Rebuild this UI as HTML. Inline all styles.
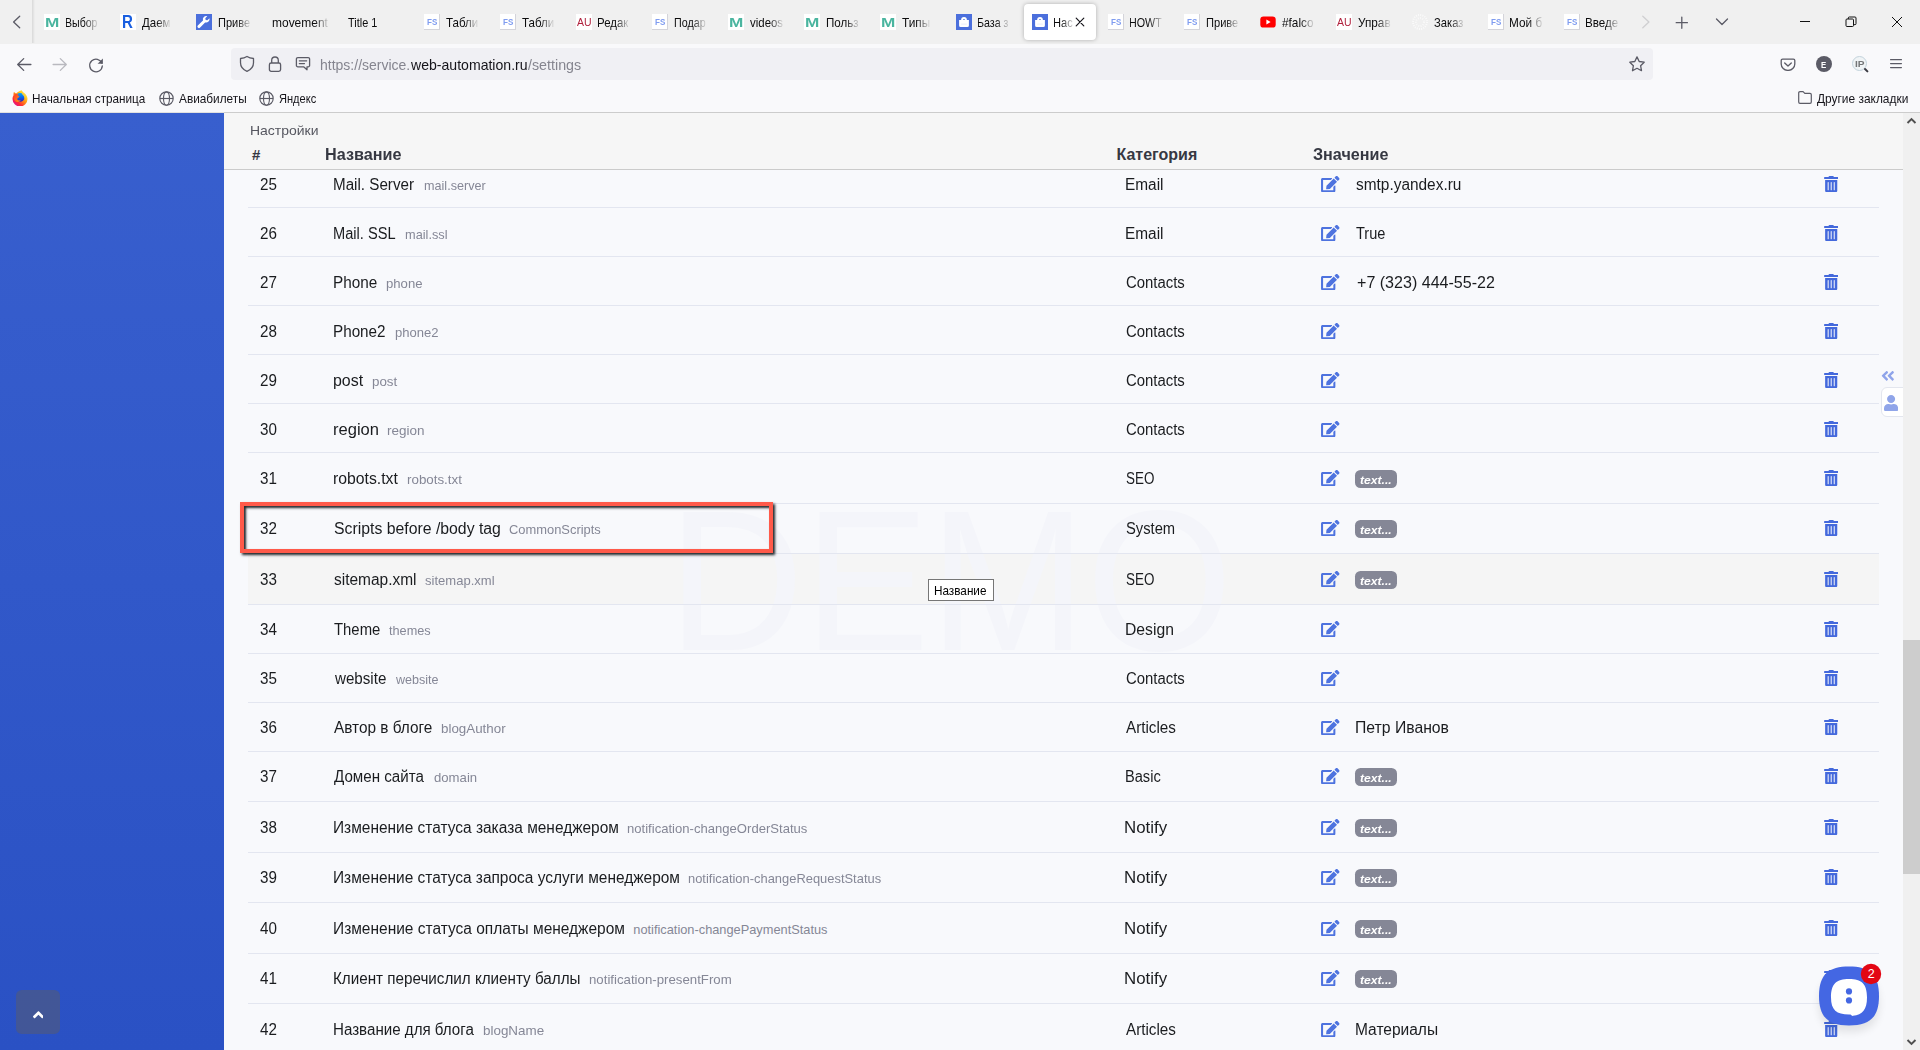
<!DOCTYPE html>
<html lang="ru"><head><meta charset="utf-8"><title>Настройки</title><style>
html,body{margin:0;padding:0}
body{width:1920px;height:1050px;overflow:hidden;position:relative;background:#f8f9fc;font-family:"Liberation Sans",sans-serif}
.a{position:absolute}
.t{position:absolute;white-space:pre;transform-origin:0 50%}
.sep{left:248px;width:1631px;height:1px;background:#e3e6f0}
.badge{width:42px;height:17.5px;border-radius:5.500px;background:#858796}
.tl{overflow:hidden}
.wm{font-size:196px;line-height:220px;font-weight:normal;color:#f4f5fa;letter-spacing:6px;white-space:pre}
</style></head>
<body>
<div class="a" style="left:0;top:113px;width:224px;height:937px;background:linear-gradient(180deg,#385fce,#2a51c4)"></div>
<div class="a" style="left:248px;top:554px;width:1631px;height:50px;background:#f5f5f5"></div>
<span class="t" style="left:667.95px;top:440.60px;font-size:200px;line-height:280px;color:#f4f5fa;transform:scaleX(0.9409);">DEMO</span>
<div class="a sep" style="top:207px"></div>
<div class="a sep" style="top:256px"></div>
<div class="a sep" style="top:305px"></div>
<div class="a sep" style="top:354px"></div>
<div class="a sep" style="top:403px"></div>
<div class="a sep" style="top:452px"></div>
<div class="a sep" style="top:503px"></div>
<div class="a sep" style="top:553px"></div>
<div class="a sep" style="top:604px"></div>
<div class="a sep" style="top:653px"></div>
<div class="a sep" style="top:702px"></div>
<div class="a sep" style="top:751px"></div>
<div class="a sep" style="top:801px"></div>
<div class="a sep" style="top:852px"></div>
<div class="a sep" style="top:902px"></div>
<div class="a sep" style="top:953px"></div>
<div class="a sep" style="top:1003px"></div>
<span class="t" style="left:260.30px;top:173.60px;font-size:16px;line-height:22px;color:#1a1c1f;transform:scaleX(0.9498);">25</span>
<span class="t" style="left:333.35px;top:173.60px;font-size:16px;line-height:22px;color:#1a1c1f;transform:scaleX(0.9492);">Mail. Server</span>
<span class="t" style="left:424.30px;top:176.60px;font-size:12.8px;line-height:18px;color:#858796;transform:scaleX(0.9856);">mail.server</span>
<span class="t" style="left:1124.54px;top:173.60px;font-size:16px;line-height:22px;color:#1a1c1f;transform:scaleX(0.9622);">Email</span>
<svg class="a" style="left:1321.00px;top:175.80px;" width="18.50" height="16.40" viewBox="0 0 576 512"><path fill="#4e73df" d="M402.6 83.2l90.2 90.2c3.8 3.8 3.8 10 0 13.8L274.4 405.6l-92.8 10.3c-12.4 1.4-22.9-9.1-21.5-21.5l10.3-92.8L388.8 83.2c3.8-3.8 10-3.8 13.8 0zm162-22.9l-48.8-48.8c-15.2-15.2-39.9-15.2-55.2 0l-35.4 35.4c-3.8 3.8-3.8 10 0 13.8l90.2 90.2c3.8 3.8 10 3.8 13.8 0l35.4-35.4c15.2-15.3 15.2-40 0-55.2zM384 346.2V448H64V128h229.8c3.2 0 6.200-1.300 8.500-3.500l40-40c7.600-7.600 2.200-20.500-8.500-20.500H48C21.500 64 0 85.500 0 112v352c0 26.500 21.500 48 48 48h352c26.500 0 48-21.500 48-48V306.200c0-10.700-12.900-16-20.500-8.500l-40 40c-2.200 2.300-3.500 5.300-3.500 8.500z"/></svg>
<svg class="a" style="left:1824.00px;top:175.90px;" width="14.40" height="16.20" viewBox="0 0 448 512"><path fill="#4469dc" d="M32 464a48 48 0 0 0 48 48h288a48 48 0 0 0 48-48V128H32zm272-256a16 16 0 0 1 32 0v224a16 16 0 0 1-32 0zm-96 0a16 16 0 0 1 32 0v224a16 16 0 0 1-32 0zm-96 0a16 16 0 0 1 32 0v224a16 16 0 0 1-32 0zM432 32H312l-9.400-18.700A24 24 0 0 0 281.100 0H166.800a23.720 23.720 0 0 0-21.400 13.300L136 32H16A16 16 0 0 0 0 48v32a16 16 0 0 0 16 16h416a16 16 0 0 0 16-16V48a16 16 0 0 0-16-16z"/></svg>
<span class="t" style="left:1355.50px;top:173.60px;font-size:16px;line-height:22px;color:#1a1c1f;transform:scaleX(0.9633);">smtp.yandex.ru</span>
<span class="t" style="left:260.30px;top:222.60px;font-size:16px;line-height:22px;color:#1a1c1f;transform:scaleX(0.9498);">26</span>
<span class="t" style="left:333.39px;top:222.60px;font-size:16px;line-height:22px;color:#1a1c1f;transform:scaleX(0.9131);">Mail. SSL</span>
<span class="t" style="left:405.30px;top:225.60px;font-size:12.8px;line-height:18px;color:#858796;transform:scaleX(0.9972);">mail.ssl</span>
<span class="t" style="left:1124.54px;top:222.60px;font-size:16px;line-height:22px;color:#1a1c1f;transform:scaleX(0.9622);">Email</span>
<svg class="a" style="left:1321.00px;top:224.80px;" width="18.50" height="16.40" viewBox="0 0 576 512"><path fill="#4e73df" d="M402.6 83.2l90.2 90.2c3.8 3.8 3.8 10 0 13.8L274.4 405.6l-92.8 10.3c-12.4 1.4-22.9-9.1-21.5-21.5l10.3-92.8L388.8 83.2c3.8-3.8 10-3.8 13.8 0zm162-22.9l-48.8-48.8c-15.2-15.2-39.9-15.2-55.2 0l-35.4 35.4c-3.8 3.8-3.8 10 0 13.8l90.2 90.2c3.8 3.8 10 3.8 13.8 0l35.4-35.4c15.2-15.3 15.2-40 0-55.2zM384 346.2V448H64V128h229.8c3.2 0 6.200-1.300 8.500-3.500l40-40c7.600-7.600 2.200-20.500-8.500-20.500H48C21.500 64 0 85.500 0 112v352c0 26.500 21.500 48 48 48h352c26.500 0 48-21.500 48-48V306.200c0-10.700-12.900-16-20.500-8.500l-40 40c-2.200 2.300-3.500 5.300-3.500 8.500z"/></svg>
<svg class="a" style="left:1824.00px;top:224.90px;" width="14.40" height="16.20" viewBox="0 0 448 512"><path fill="#4469dc" d="M32 464a48 48 0 0 0 48 48h288a48 48 0 0 0 48-48V128H32zm272-256a16 16 0 0 1 32 0v224a16 16 0 0 1-32 0zm-96 0a16 16 0 0 1 32 0v224a16 16 0 0 1-32 0zm-96 0a16 16 0 0 1 32 0v224a16 16 0 0 1-32 0zM432 32H312l-9.400-18.700A24 24 0 0 0 281.100 0H166.800a23.720 23.720 0 0 0-21.400 13.300L136 32H16A16 16 0 0 0 0 48v32a16 16 0 0 0 16 16h416a16 16 0 0 0 16-16V48a16 16 0 0 0-16-16z"/></svg>
<span class="t" style="left:1355.50px;top:222.60px;font-size:16px;line-height:22px;color:#1a1c1f;transform:scaleX(0.9103);">True</span>
<span class="t" style="left:260.30px;top:271.60px;font-size:16px;line-height:22px;color:#1a1c1f;transform:scaleX(0.9498);">27</span>
<span class="t" style="left:333.34px;top:271.60px;font-size:16px;line-height:22px;color:#1a1c1f;transform:scaleX(0.9566);">Phone</span>
<span class="t" style="left:386.30px;top:274.60px;font-size:12.8px;line-height:18px;color:#858796;transform:scaleX(1.0263);">phone</span>
<span class="t" style="left:1125.50px;top:271.60px;font-size:16px;line-height:22px;color:#1a1c1f;transform:scaleX(0.9313);">Contacts</span>
<svg class="a" style="left:1321.00px;top:273.80px;" width="18.50" height="16.40" viewBox="0 0 576 512"><path fill="#4e73df" d="M402.6 83.2l90.2 90.2c3.8 3.8 3.8 10 0 13.8L274.4 405.6l-92.8 10.3c-12.4 1.4-22.9-9.1-21.5-21.5l10.3-92.8L388.8 83.2c3.8-3.8 10-3.8 13.8 0zm162-22.9l-48.8-48.8c-15.2-15.2-39.9-15.2-55.2 0l-35.4 35.4c-3.8 3.8-3.8 10 0 13.8l90.2 90.2c3.8 3.8 10 3.8 13.8 0l35.4-35.4c15.2-15.3 15.2-40 0-55.2zM384 346.2V448H64V128h229.8c3.2 0 6.200-1.300 8.500-3.500l40-40c7.600-7.600 2.200-20.500-8.500-20.500H48C21.500 64 0 85.500 0 112v352c0 26.500 21.500 48 48 48h352c26.500 0 48-21.500 48-48V306.200c0-10.700-12.900-16-20.500-8.500l-40 40c-2.200 2.300-3.500 5.300-3.500 8.500z"/></svg>
<svg class="a" style="left:1824.00px;top:273.90px;" width="14.40" height="16.20" viewBox="0 0 448 512"><path fill="#4469dc" d="M32 464a48 48 0 0 0 48 48h288a48 48 0 0 0 48-48V128H32zm272-256a16 16 0 0 1 32 0v224a16 16 0 0 1-32 0zm-96 0a16 16 0 0 1 32 0v224a16 16 0 0 1-32 0zm-96 0a16 16 0 0 1 32 0v224a16 16 0 0 1-32 0zM432 32H312l-9.400-18.700A24 24 0 0 0 281.100 0H166.800a23.720 23.720 0 0 0-21.400 13.300L136 32H16A16 16 0 0 0 0 48v32a16 16 0 0 0 16 16h416a16 16 0 0 0 16-16V48a16 16 0 0 0-16-16z"/></svg>
<span class="t" style="left:1356.50px;top:271.60px;font-size:16px;line-height:22px;color:#1a1c1f;transform:scaleX(1.0034);">+7 (323) 444-55-22</span>
<span class="t" style="left:260.30px;top:320.60px;font-size:16px;line-height:22px;color:#1a1c1f;transform:scaleX(0.9498);">28</span>
<span class="t" style="left:333.35px;top:320.60px;font-size:16px;line-height:22px;color:#1a1c1f;transform:scaleX(0.9527);">Phone2</span>
<span class="t" style="left:395.30px;top:323.60px;font-size:12.8px;line-height:18px;color:#858796;transform:scaleX(1.0191);">phone2</span>
<span class="t" style="left:1125.50px;top:320.60px;font-size:16px;line-height:22px;color:#1a1c1f;transform:scaleX(0.9313);">Contacts</span>
<svg class="a" style="left:1321.00px;top:322.80px;" width="18.50" height="16.40" viewBox="0 0 576 512"><path fill="#4e73df" d="M402.6 83.2l90.2 90.2c3.8 3.8 3.8 10 0 13.8L274.4 405.6l-92.8 10.3c-12.4 1.4-22.9-9.1-21.5-21.5l10.3-92.8L388.8 83.2c3.8-3.8 10-3.8 13.8 0zm162-22.9l-48.8-48.8c-15.2-15.2-39.9-15.2-55.2 0l-35.4 35.4c-3.8 3.8-3.8 10 0 13.8l90.2 90.2c3.8 3.8 10 3.8 13.8 0l35.4-35.4c15.2-15.3 15.2-40 0-55.2zM384 346.2V448H64V128h229.8c3.2 0 6.200-1.300 8.500-3.500l40-40c7.600-7.600 2.200-20.500-8.500-20.500H48C21.500 64 0 85.500 0 112v352c0 26.500 21.500 48 48 48h352c26.500 0 48-21.500 48-48V306.200c0-10.700-12.900-16-20.500-8.500l-40 40c-2.200 2.300-3.500 5.300-3.500 8.500z"/></svg>
<svg class="a" style="left:1824.00px;top:322.90px;" width="14.40" height="16.20" viewBox="0 0 448 512"><path fill="#4469dc" d="M32 464a48 48 0 0 0 48 48h288a48 48 0 0 0 48-48V128H32zm272-256a16 16 0 0 1 32 0v224a16 16 0 0 1-32 0zm-96 0a16 16 0 0 1 32 0v224a16 16 0 0 1-32 0zm-96 0a16 16 0 0 1 32 0v224a16 16 0 0 1-32 0zM432 32H312l-9.400-18.700A24 24 0 0 0 281.100 0H166.800a23.720 23.720 0 0 0-21.400 13.300L136 32H16A16 16 0 0 0 0 48v32a16 16 0 0 0 16 16h416a16 16 0 0 0 16-16V48a16 16 0 0 0-16-16z"/></svg>
<span class="t" style="left:260.30px;top:369.60px;font-size:16px;line-height:22px;color:#1a1c1f;transform:scaleX(0.9498);">29</span>
<span class="t" style="left:333.30px;top:369.60px;font-size:16px;line-height:22px;color:#1a1c1f;transform:scaleX(0.9967);">post</span>
<span class="t" style="left:372.30px;top:372.60px;font-size:12.8px;line-height:18px;color:#858796;transform:scaleX(1.0433);">post</span>
<span class="t" style="left:1125.50px;top:369.60px;font-size:16px;line-height:22px;color:#1a1c1f;transform:scaleX(0.9313);">Contacts</span>
<svg class="a" style="left:1321.00px;top:371.80px;" width="18.50" height="16.40" viewBox="0 0 576 512"><path fill="#4e73df" d="M402.6 83.2l90.2 90.2c3.8 3.8 3.8 10 0 13.8L274.4 405.6l-92.8 10.3c-12.4 1.4-22.9-9.1-21.5-21.5l10.3-92.8L388.8 83.2c3.8-3.8 10-3.8 13.8 0zm162-22.9l-48.8-48.8c-15.2-15.2-39.9-15.2-55.2 0l-35.4 35.4c-3.8 3.8-3.8 10 0 13.8l90.2 90.2c3.8 3.8 10 3.8 13.8 0l35.4-35.4c15.2-15.3 15.2-40 0-55.2zM384 346.2V448H64V128h229.8c3.2 0 6.200-1.300 8.500-3.500l40-40c7.600-7.600 2.200-20.500-8.500-20.500H48C21.500 64 0 85.500 0 112v352c0 26.500 21.500 48 48 48h352c26.500 0 48-21.500 48-48V306.200c0-10.700-12.900-16-20.500-8.500l-40 40c-2.200 2.300-3.500 5.300-3.500 8.500z"/></svg>
<svg class="a" style="left:1824.00px;top:371.90px;" width="14.40" height="16.20" viewBox="0 0 448 512"><path fill="#4469dc" d="M32 464a48 48 0 0 0 48 48h288a48 48 0 0 0 48-48V128H32zm272-256a16 16 0 0 1 32 0v224a16 16 0 0 1-32 0zm-96 0a16 16 0 0 1 32 0v224a16 16 0 0 1-32 0zm-96 0a16 16 0 0 1 32 0v224a16 16 0 0 1-32 0zM432 32H312l-9.400-18.700A24 24 0 0 0 281.100 0H166.800a23.720 23.720 0 0 0-21.400 13.300L136 32H16A16 16 0 0 0 0 48v32a16 16 0 0 0 16 16h416a16 16 0 0 0 16-16V48a16 16 0 0 0-16-16z"/></svg>
<span class="t" style="left:260.30px;top:418.60px;font-size:16px;line-height:22px;color:#1a1c1f;transform:scaleX(0.9498);">30</span>
<span class="t" style="left:333.27px;top:418.60px;font-size:16px;line-height:22px;color:#1a1c1f;transform:scaleX(1.0334);">region</span>
<span class="t" style="left:387.30px;top:421.60px;font-size:12.8px;line-height:18px;color:#858796;transform:scaleX(1.0548);">region</span>
<span class="t" style="left:1125.50px;top:418.60px;font-size:16px;line-height:22px;color:#1a1c1f;transform:scaleX(0.9313);">Contacts</span>
<svg class="a" style="left:1321.00px;top:420.80px;" width="18.50" height="16.40" viewBox="0 0 576 512"><path fill="#4e73df" d="M402.6 83.2l90.2 90.2c3.8 3.8 3.8 10 0 13.8L274.4 405.6l-92.8 10.3c-12.4 1.4-22.9-9.1-21.5-21.5l10.3-92.8L388.8 83.2c3.8-3.8 10-3.8 13.8 0zm162-22.9l-48.8-48.8c-15.2-15.2-39.9-15.2-55.2 0l-35.4 35.4c-3.8 3.8-3.8 10 0 13.8l90.2 90.2c3.8 3.8 10 3.8 13.8 0l35.4-35.4c15.2-15.3 15.2-40 0-55.2zM384 346.2V448H64V128h229.8c3.2 0 6.200-1.300 8.500-3.500l40-40c7.600-7.600 2.200-20.500-8.500-20.500H48C21.500 64 0 85.500 0 112v352c0 26.500 21.500 48 48 48h352c26.500 0 48-21.500 48-48V306.200c0-10.700-12.900-16-20.500-8.500l-40 40c-2.200 2.300-3.500 5.300-3.500 8.500z"/></svg>
<svg class="a" style="left:1824.00px;top:420.90px;" width="14.40" height="16.20" viewBox="0 0 448 512"><path fill="#4469dc" d="M32 464a48 48 0 0 0 48 48h288a48 48 0 0 0 48-48V128H32zm272-256a16 16 0 0 1 32 0v224a16 16 0 0 1-32 0zm-96 0a16 16 0 0 1 32 0v224a16 16 0 0 1-32 0zm-96 0a16 16 0 0 1 32 0v224a16 16 0 0 1-32 0zM432 32H312l-9.400-18.700A24 24 0 0 0 281.100 0H166.800a23.720 23.720 0 0 0-21.400 13.300L136 32H16A16 16 0 0 0 0 48v32a16 16 0 0 0 16 16h416a16 16 0 0 0 16-16V48a16 16 0 0 0-16-16z"/></svg>
<span class="t" style="left:260.30px;top:467.60px;font-size:16px;line-height:22px;color:#1a1c1f;transform:scaleX(0.9498);">31</span>
<span class="t" style="left:333.31px;top:467.60px;font-size:16px;line-height:22px;color:#1a1c1f;transform:scaleX(0.9853);">robots.txt</span>
<span class="t" style="left:407.30px;top:470.60px;font-size:12.8px;line-height:18px;color:#858796;transform:scaleX(1.0438);">robots.txt</span>
<span class="t" style="left:1125.50px;top:467.60px;font-size:16px;line-height:22px;color:#1a1c1f;transform:scaleX(0.8397);">SEO</span>
<svg class="a" style="left:1321.00px;top:469.80px;" width="18.50" height="16.40" viewBox="0 0 576 512"><path fill="#4e73df" d="M402.6 83.2l90.2 90.2c3.8 3.8 3.8 10 0 13.8L274.4 405.6l-92.8 10.3c-12.4 1.4-22.9-9.1-21.5-21.5l10.3-92.8L388.8 83.2c3.8-3.8 10-3.8 13.8 0zm162-22.9l-48.8-48.8c-15.2-15.2-39.9-15.2-55.2 0l-35.4 35.4c-3.8 3.8-3.8 10 0 13.8l90.2 90.2c3.8 3.8 10 3.8 13.8 0l35.4-35.4c15.2-15.3 15.2-40 0-55.2zM384 346.2V448H64V128h229.8c3.2 0 6.200-1.300 8.500-3.500l40-40c7.600-7.600 2.200-20.500-8.500-20.500H48C21.500 64 0 85.500 0 112v352c0 26.500 21.500 48 48 48h352c26.500 0 48-21.500 48-48V306.200c0-10.700-12.900-16-20.500-8.500l-40 40c-2.200 2.300-3.500 5.300-3.500 8.500z"/></svg>
<svg class="a" style="left:1824.00px;top:469.90px;" width="14.40" height="16.20" viewBox="0 0 448 512"><path fill="#4469dc" d="M32 464a48 48 0 0 0 48 48h288a48 48 0 0 0 48-48V128H32zm272-256a16 16 0 0 1 32 0v224a16 16 0 0 1-32 0zm-96 0a16 16 0 0 1 32 0v224a16 16 0 0 1-32 0zm-96 0a16 16 0 0 1 32 0v224a16 16 0 0 1-32 0zM432 32H312l-9.400-18.700A24 24 0 0 0 281.100 0H166.800a23.720 23.720 0 0 0-21.400 13.300L136 32H16A16 16 0 0 0 0 48v32a16 16 0 0 0 16 16h416a16 16 0 0 0 16-16V48a16 16 0 0 0-16-16z"/></svg>
<div class="a badge" style="left:1355px;top:470.3px"></div>
<span class="t" style="left:1360.00px;top:472.10px;font-size:11.2px;line-height:16px;color:#fff;font-weight:bold;font-style:italic;transform:scaleX(1.0820);">text...</span>
<span class="t" style="left:260.30px;top:517.60px;font-size:16px;line-height:22px;color:#1a1c1f;transform:scaleX(0.9498);">32</span>
<span class="t" style="left:334.30px;top:517.60px;font-size:16px;line-height:22px;color:#1a1c1f;transform:scaleX(0.9876);">Scripts before /body tag</span>
<span class="t" style="left:509.30px;top:520.60px;font-size:12.8px;line-height:18px;color:#858796;transform:scaleX(1.0086);">CommonScripts</span>
<span class="t" style="left:1125.50px;top:517.60px;font-size:16px;line-height:22px;color:#1a1c1f;transform:scaleX(0.9205);">System</span>
<svg class="a" style="left:1321.00px;top:519.80px;" width="18.50" height="16.40" viewBox="0 0 576 512"><path fill="#4e73df" d="M402.6 83.2l90.2 90.2c3.8 3.8 3.8 10 0 13.8L274.4 405.6l-92.8 10.3c-12.4 1.4-22.9-9.1-21.5-21.5l10.3-92.8L388.8 83.2c3.8-3.8 10-3.8 13.8 0zm162-22.9l-48.8-48.8c-15.2-15.2-39.9-15.2-55.2 0l-35.4 35.4c-3.8 3.8-3.8 10 0 13.8l90.2 90.2c3.8 3.8 10 3.8 13.8 0l35.4-35.4c15.2-15.3 15.2-40 0-55.2zM384 346.2V448H64V128h229.8c3.2 0 6.200-1.300 8.500-3.500l40-40c7.600-7.600 2.200-20.500-8.500-20.500H48C21.500 64 0 85.500 0 112v352c0 26.500 21.500 48 48 48h352c26.500 0 48-21.500 48-48V306.200c0-10.700-12.900-16-20.500-8.500l-40 40c-2.200 2.300-3.500 5.300-3.500 8.500z"/></svg>
<svg class="a" style="left:1824.00px;top:519.90px;" width="14.40" height="16.20" viewBox="0 0 448 512"><path fill="#4469dc" d="M32 464a48 48 0 0 0 48 48h288a48 48 0 0 0 48-48V128H32zm272-256a16 16 0 0 1 32 0v224a16 16 0 0 1-32 0zm-96 0a16 16 0 0 1 32 0v224a16 16 0 0 1-32 0zm-96 0a16 16 0 0 1 32 0v224a16 16 0 0 1-32 0zM432 32H312l-9.400-18.700A24 24 0 0 0 281.100 0H166.800a23.720 23.720 0 0 0-21.400 13.300L136 32H16A16 16 0 0 0 0 48v32a16 16 0 0 0 16 16h416a16 16 0 0 0 16-16V48a16 16 0 0 0-16-16z"/></svg>
<div class="a badge" style="left:1355px;top:520.3px"></div>
<span class="t" style="left:1360.00px;top:522.10px;font-size:11.2px;line-height:16px;color:#fff;font-weight:bold;font-style:italic;transform:scaleX(1.0820);">text...</span>
<span class="t" style="left:260.30px;top:568.60px;font-size:16px;line-height:22px;color:#1a1c1f;transform:scaleX(0.9498);">33</span>
<span class="t" style="left:334.30px;top:568.60px;font-size:16px;line-height:22px;color:#1a1c1f;transform:scaleX(0.9670);">sitemap.xml</span>
<span class="t" style="left:425.30px;top:571.60px;font-size:12.8px;line-height:18px;color:#858796;transform:scaleX(1.0190);">sitemap.xml</span>
<span class="t" style="left:1125.50px;top:568.60px;font-size:16px;line-height:22px;color:#1a1c1f;transform:scaleX(0.8397);">SEO</span>
<svg class="a" style="left:1321.00px;top:570.80px;" width="18.50" height="16.40" viewBox="0 0 576 512"><path fill="#4e73df" d="M402.6 83.2l90.2 90.2c3.8 3.8 3.8 10 0 13.8L274.4 405.6l-92.8 10.3c-12.4 1.4-22.9-9.1-21.5-21.5l10.3-92.8L388.8 83.2c3.8-3.8 10-3.8 13.8 0zm162-22.9l-48.8-48.8c-15.2-15.2-39.9-15.2-55.2 0l-35.4 35.4c-3.8 3.8-3.8 10 0 13.8l90.2 90.2c3.8 3.8 10 3.8 13.8 0l35.4-35.4c15.2-15.3 15.2-40 0-55.2zM384 346.2V448H64V128h229.8c3.2 0 6.200-1.300 8.500-3.500l40-40c7.600-7.600 2.200-20.500-8.500-20.500H48C21.500 64 0 85.500 0 112v352c0 26.500 21.500 48 48 48h352c26.500 0 48-21.500 48-48V306.200c0-10.700-12.900-16-20.500-8.500l-40 40c-2.200 2.300-3.500 5.300-3.500 8.500z"/></svg>
<svg class="a" style="left:1824.00px;top:570.90px;" width="14.40" height="16.20" viewBox="0 0 448 512"><path fill="#4469dc" d="M32 464a48 48 0 0 0 48 48h288a48 48 0 0 0 48-48V128H32zm272-256a16 16 0 0 1 32 0v224a16 16 0 0 1-32 0zm-96 0a16 16 0 0 1 32 0v224a16 16 0 0 1-32 0zm-96 0a16 16 0 0 1 32 0v224a16 16 0 0 1-32 0zM432 32H312l-9.400-18.700A24 24 0 0 0 281.100 0H166.800a23.720 23.720 0 0 0-21.400 13.300L136 32H16A16 16 0 0 0 0 48v32a16 16 0 0 0 16 16h416a16 16 0 0 0 16-16V48a16 16 0 0 0-16-16z"/></svg>
<div class="a badge" style="left:1355px;top:571.3px"></div>
<span class="t" style="left:1360.00px;top:573.10px;font-size:11.2px;line-height:16px;color:#fff;font-weight:bold;font-style:italic;transform:scaleX(1.0820);">text...</span>
<span class="t" style="left:260.30px;top:618.60px;font-size:16px;line-height:22px;color:#1a1c1f;transform:scaleX(0.9498);">34</span>
<span class="t" style="left:334.30px;top:618.60px;font-size:16px;line-height:22px;color:#1a1c1f;transform:scaleX(0.9299);">Theme</span>
<span class="t" style="left:389.00px;top:621.60px;font-size:12.8px;line-height:18px;color:#858796;transform:scaleX(0.9936);">themes</span>
<span class="t" style="left:1124.52px;top:618.60px;font-size:16px;line-height:22px;color:#1a1c1f;transform:scaleX(0.9811);">Design</span>
<svg class="a" style="left:1321.00px;top:620.80px;" width="18.50" height="16.40" viewBox="0 0 576 512"><path fill="#4e73df" d="M402.6 83.2l90.2 90.2c3.8 3.8 3.8 10 0 13.8L274.4 405.6l-92.8 10.3c-12.4 1.4-22.9-9.1-21.5-21.5l10.3-92.8L388.8 83.2c3.8-3.8 10-3.8 13.8 0zm162-22.9l-48.8-48.8c-15.2-15.2-39.9-15.2-55.2 0l-35.4 35.4c-3.8 3.8-3.8 10 0 13.8l90.2 90.2c3.8 3.8 10 3.8 13.8 0l35.4-35.4c15.2-15.3 15.2-40 0-55.2zM384 346.2V448H64V128h229.8c3.2 0 6.200-1.300 8.500-3.500l40-40c7.600-7.600 2.200-20.500-8.500-20.500H48C21.500 64 0 85.500 0 112v352c0 26.500 21.500 48 48 48h352c26.500 0 48-21.500 48-48V306.200c0-10.700-12.900-16-20.500-8.500l-40 40c-2.200 2.300-3.500 5.300-3.500 8.500z"/></svg>
<svg class="a" style="left:1824.00px;top:620.90px;" width="14.40" height="16.20" viewBox="0 0 448 512"><path fill="#4469dc" d="M32 464a48 48 0 0 0 48 48h288a48 48 0 0 0 48-48V128H32zm272-256a16 16 0 0 1 32 0v224a16 16 0 0 1-32 0zm-96 0a16 16 0 0 1 32 0v224a16 16 0 0 1-32 0zm-96 0a16 16 0 0 1 32 0v224a16 16 0 0 1-32 0zM432 32H312l-9.400-18.700A24 24 0 0 0 281.100 0H166.800a23.720 23.720 0 0 0-21.400 13.300L136 32H16A16 16 0 0 0 0 48v32a16 16 0 0 0 16 16h416a16 16 0 0 0 16-16V48a16 16 0 0 0-16-16z"/></svg>
<span class="t" style="left:260.30px;top:667.60px;font-size:16px;line-height:22px;color:#1a1c1f;transform:scaleX(0.9498);">35</span>
<span class="t" style="left:335.25px;top:667.60px;font-size:16px;line-height:22px;color:#1a1c1f;transform:scaleX(0.9467);">website</span>
<span class="t" style="left:396.28px;top:670.60px;font-size:12.8px;line-height:18px;color:#858796;transform:scaleX(0.9803);">website</span>
<span class="t" style="left:1125.50px;top:667.60px;font-size:16px;line-height:22px;color:#1a1c1f;transform:scaleX(0.9313);">Contacts</span>
<svg class="a" style="left:1321.00px;top:669.80px;" width="18.50" height="16.40" viewBox="0 0 576 512"><path fill="#4e73df" d="M402.6 83.2l90.2 90.2c3.8 3.8 3.8 10 0 13.8L274.4 405.6l-92.8 10.3c-12.4 1.4-22.9-9.1-21.5-21.5l10.3-92.8L388.8 83.2c3.8-3.8 10-3.8 13.8 0zm162-22.9l-48.8-48.8c-15.2-15.2-39.9-15.2-55.2 0l-35.4 35.4c-3.8 3.8-3.8 10 0 13.8l90.2 90.2c3.8 3.8 10 3.8 13.8 0l35.4-35.4c15.2-15.3 15.2-40 0-55.2zM384 346.2V448H64V128h229.8c3.2 0 6.200-1.300 8.500-3.500l40-40c7.600-7.600 2.200-20.500-8.500-20.500H48C21.500 64 0 85.500 0 112v352c0 26.500 21.500 48 48 48h352c26.500 0 48-21.500 48-48V306.200c0-10.700-12.900-16-20.500-8.500l-40 40c-2.200 2.300-3.500 5.300-3.500 8.500z"/></svg>
<svg class="a" style="left:1824.00px;top:669.90px;" width="14.40" height="16.20" viewBox="0 0 448 512"><path fill="#4469dc" d="M32 464a48 48 0 0 0 48 48h288a48 48 0 0 0 48-48V128H32zm272-256a16 16 0 0 1 32 0v224a16 16 0 0 1-32 0zm-96 0a16 16 0 0 1 32 0v224a16 16 0 0 1-32 0zm-96 0a16 16 0 0 1 32 0v224a16 16 0 0 1-32 0zM432 32H312l-9.400-18.700A24 24 0 0 0 281.100 0H166.800a23.720 23.720 0 0 0-21.400 13.300L136 32H16A16 16 0 0 0 0 48v32a16 16 0 0 0 16 16h416a16 16 0 0 0 16-16V48a16 16 0 0 0-16-16z"/></svg>
<span class="t" style="left:260.30px;top:716.60px;font-size:16px;line-height:22px;color:#1a1c1f;transform:scaleX(0.9498);">36</span>
<span class="t" style="left:334.30px;top:716.60px;font-size:16px;line-height:22px;color:#1a1c1f;transform:scaleX(0.9600);">Автор в блоге</span>
<span class="t" style="left:441.30px;top:719.60px;font-size:12.8px;line-height:18px;color:#858796;transform:scaleX(1.0441);">blogAuthor</span>
<span class="t" style="left:1125.50px;top:716.60px;font-size:16px;line-height:22px;color:#1a1c1f;transform:scaleX(0.9513);">Articles</span>
<svg class="a" style="left:1321.00px;top:718.80px;" width="18.50" height="16.40" viewBox="0 0 576 512"><path fill="#4e73df" d="M402.6 83.2l90.2 90.2c3.8 3.8 3.8 10 0 13.8L274.4 405.6l-92.8 10.3c-12.4 1.4-22.9-9.1-21.5-21.5l10.3-92.8L388.8 83.2c3.8-3.8 10-3.8 13.8 0zm162-22.9l-48.8-48.8c-15.2-15.2-39.9-15.2-55.2 0l-35.4 35.4c-3.8 3.8-3.8 10 0 13.8l90.2 90.2c3.8 3.8 10 3.8 13.8 0l35.4-35.4c15.2-15.3 15.2-40 0-55.2zM384 346.2V448H64V128h229.8c3.2 0 6.200-1.300 8.500-3.500l40-40c7.600-7.600 2.200-20.500-8.500-20.500H48C21.500 64 0 85.500 0 112v352c0 26.500 21.500 48 48 48h352c26.500 0 48-21.500 48-48V306.200c0-10.700-12.900-16-20.500-8.500l-40 40c-2.200 2.300-3.500 5.300-3.500 8.500z"/></svg>
<svg class="a" style="left:1824.00px;top:718.90px;" width="14.40" height="16.20" viewBox="0 0 448 512"><path fill="#4469dc" d="M32 464a48 48 0 0 0 48 48h288a48 48 0 0 0 48-48V128H32zm272-256a16 16 0 0 1 32 0v224a16 16 0 0 1-32 0zm-96 0a16 16 0 0 1 32 0v224a16 16 0 0 1-32 0zm-96 0a16 16 0 0 1 32 0v224a16 16 0 0 1-32 0zM432 32H312l-9.400-18.700A24 24 0 0 0 281.100 0H166.800a23.720 23.720 0 0 0-21.400 13.300L136 32H16A16 16 0 0 0 0 48v32a16 16 0 0 0 16 16h416a16 16 0 0 0 16-16V48a16 16 0 0 0-16-16z"/></svg>
<span class="t" style="left:1354.82px;top:716.60px;font-size:16px;line-height:22px;color:#1a1c1f;transform:scaleX(0.9841);">Петр Иванов</span>
<span class="t" style="left:260.30px;top:765.60px;font-size:16px;line-height:22px;color:#1a1c1f;transform:scaleX(0.9498);">37</span>
<span class="t" style="left:334.30px;top:765.60px;font-size:16px;line-height:22px;color:#1a1c1f;transform:scaleX(0.9466);">Домен сайта</span>
<span class="t" style="left:433.70px;top:768.60px;font-size:12.8px;line-height:18px;color:#858796;transform:scaleX(1.0274);">domain</span>
<span class="t" style="left:1124.59px;top:765.60px;font-size:16px;line-height:22px;color:#1a1c1f;transform:scaleX(0.9128);">Basic</span>
<svg class="a" style="left:1321.00px;top:767.80px;" width="18.50" height="16.40" viewBox="0 0 576 512"><path fill="#4e73df" d="M402.6 83.2l90.2 90.2c3.8 3.8 3.8 10 0 13.8L274.4 405.6l-92.8 10.3c-12.4 1.4-22.9-9.1-21.5-21.5l10.3-92.8L388.8 83.2c3.8-3.8 10-3.8 13.8 0zm162-22.9l-48.8-48.8c-15.2-15.2-39.9-15.2-55.2 0l-35.4 35.4c-3.8 3.8-3.8 10 0 13.8l90.2 90.2c3.8 3.8 10 3.8 13.8 0l35.4-35.4c15.2-15.3 15.2-40 0-55.2zM384 346.2V448H64V128h229.8c3.2 0 6.200-1.300 8.500-3.500l40-40c7.600-7.600 2.200-20.500-8.500-20.500H48C21.500 64 0 85.500 0 112v352c0 26.500 21.500 48 48 48h352c26.500 0 48-21.500 48-48V306.200c0-10.700-12.900-16-20.500-8.500l-40 40c-2.200 2.300-3.500 5.300-3.500 8.500z"/></svg>
<svg class="a" style="left:1824.00px;top:767.90px;" width="14.40" height="16.20" viewBox="0 0 448 512"><path fill="#4469dc" d="M32 464a48 48 0 0 0 48 48h288a48 48 0 0 0 48-48V128H32zm272-256a16 16 0 0 1 32 0v224a16 16 0 0 1-32 0zm-96 0a16 16 0 0 1 32 0v224a16 16 0 0 1-32 0zm-96 0a16 16 0 0 1 32 0v224a16 16 0 0 1-32 0zM432 32H312l-9.400-18.700A24 24 0 0 0 281.100 0H166.800a23.720 23.720 0 0 0-21.400 13.300L136 32H16A16 16 0 0 0 0 48v32a16 16 0 0 0 16 16h416a16 16 0 0 0 16-16V48a16 16 0 0 0-16-16z"/></svg>
<div class="a badge" style="left:1355px;top:768.3px"></div>
<span class="t" style="left:1360.00px;top:770.10px;font-size:11.2px;line-height:16px;color:#fff;font-weight:bold;font-style:italic;transform:scaleX(1.0820);">text...</span>
<span class="t" style="left:260.30px;top:816.60px;font-size:16px;line-height:22px;color:#1a1c1f;transform:scaleX(0.9498);">38</span>
<span class="t" style="left:333.33px;top:816.60px;font-size:16px;line-height:22px;color:#1a1c1f;transform:scaleX(0.9661);">Изменение статуса заказа менеджером</span>
<span class="t" style="left:627.30px;top:819.60px;font-size:12.8px;line-height:18px;color:#858796;transform:scaleX(1.0226);">notification-changeOrderStatus</span>
<span class="t" style="left:1124.45px;top:816.60px;font-size:16px;line-height:22px;color:#1a1c1f;transform:scaleX(1.0527);">Notify</span>
<svg class="a" style="left:1321.00px;top:818.80px;" width="18.50" height="16.40" viewBox="0 0 576 512"><path fill="#4e73df" d="M402.6 83.2l90.2 90.2c3.8 3.8 3.8 10 0 13.8L274.4 405.6l-92.8 10.3c-12.4 1.4-22.9-9.1-21.5-21.5l10.3-92.8L388.8 83.2c3.8-3.8 10-3.8 13.8 0zm162-22.9l-48.8-48.8c-15.2-15.2-39.9-15.2-55.2 0l-35.4 35.4c-3.8 3.8-3.8 10 0 13.8l90.2 90.2c3.8 3.8 10 3.8 13.8 0l35.4-35.4c15.2-15.3 15.2-40 0-55.2zM384 346.2V448H64V128h229.8c3.2 0 6.200-1.300 8.500-3.500l40-40c7.600-7.600 2.200-20.500-8.500-20.500H48C21.500 64 0 85.500 0 112v352c0 26.500 21.500 48 48 48h352c26.500 0 48-21.500 48-48V306.200c0-10.700-12.900-16-20.500-8.500l-40 40c-2.200 2.300-3.500 5.300-3.500 8.500z"/></svg>
<svg class="a" style="left:1824.00px;top:818.90px;" width="14.40" height="16.20" viewBox="0 0 448 512"><path fill="#4469dc" d="M32 464a48 48 0 0 0 48 48h288a48 48 0 0 0 48-48V128H32zm272-256a16 16 0 0 1 32 0v224a16 16 0 0 1-32 0zm-96 0a16 16 0 0 1 32 0v224a16 16 0 0 1-32 0zm-96 0a16 16 0 0 1 32 0v224a16 16 0 0 1-32 0zM432 32H312l-9.400-18.700A24 24 0 0 0 281.100 0H166.800a23.720 23.720 0 0 0-21.400 13.300L136 32H16A16 16 0 0 0 0 48v32a16 16 0 0 0 16 16h416a16 16 0 0 0 16-16V48a16 16 0 0 0-16-16z"/></svg>
<div class="a badge" style="left:1355px;top:819.3px"></div>
<span class="t" style="left:1360.00px;top:821.10px;font-size:11.2px;line-height:16px;color:#fff;font-weight:bold;font-style:italic;transform:scaleX(1.0820);">text...</span>
<span class="t" style="left:260.30px;top:866.60px;font-size:16px;line-height:22px;color:#1a1c1f;transform:scaleX(0.9498);">39</span>
<span class="t" style="left:333.33px;top:866.60px;font-size:16px;line-height:22px;color:#1a1c1f;transform:scaleX(0.9654);">Изменение статуса запроса услуги менеджером</span>
<span class="t" style="left:688.30px;top:869.60px;font-size:12.8px;line-height:18px;color:#858796;transform:scaleX(1.0091);">notification-changeRequestStatus</span>
<span class="t" style="left:1124.45px;top:866.60px;font-size:16px;line-height:22px;color:#1a1c1f;transform:scaleX(1.0527);">Notify</span>
<svg class="a" style="left:1321.00px;top:868.80px;" width="18.50" height="16.40" viewBox="0 0 576 512"><path fill="#4e73df" d="M402.6 83.2l90.2 90.2c3.8 3.8 3.8 10 0 13.8L274.4 405.6l-92.8 10.3c-12.4 1.4-22.9-9.1-21.5-21.5l10.3-92.8L388.8 83.2c3.8-3.8 10-3.8 13.8 0zm162-22.9l-48.8-48.8c-15.2-15.2-39.9-15.2-55.2 0l-35.4 35.4c-3.8 3.8-3.8 10 0 13.8l90.2 90.2c3.8 3.8 10 3.8 13.8 0l35.4-35.4c15.2-15.3 15.2-40 0-55.2zM384 346.2V448H64V128h229.8c3.2 0 6.200-1.300 8.500-3.500l40-40c7.600-7.600 2.200-20.500-8.500-20.500H48C21.500 64 0 85.500 0 112v352c0 26.500 21.500 48 48 48h352c26.500 0 48-21.500 48-48V306.200c0-10.700-12.900-16-20.500-8.500l-40 40c-2.200 2.300-3.500 5.300-3.500 8.500z"/></svg>
<svg class="a" style="left:1824.00px;top:868.90px;" width="14.40" height="16.20" viewBox="0 0 448 512"><path fill="#4469dc" d="M32 464a48 48 0 0 0 48 48h288a48 48 0 0 0 48-48V128H32zm272-256a16 16 0 0 1 32 0v224a16 16 0 0 1-32 0zm-96 0a16 16 0 0 1 32 0v224a16 16 0 0 1-32 0zm-96 0a16 16 0 0 1 32 0v224a16 16 0 0 1-32 0zM432 32H312l-9.400-18.700A24 24 0 0 0 281.100 0H166.800a23.720 23.720 0 0 0-21.400 13.300L136 32H16A16 16 0 0 0 0 48v32a16 16 0 0 0 16 16h416a16 16 0 0 0 16-16V48a16 16 0 0 0-16-16z"/></svg>
<div class="a badge" style="left:1355px;top:869.3px"></div>
<span class="t" style="left:1360.00px;top:871.10px;font-size:11.2px;line-height:16px;color:#fff;font-weight:bold;font-style:italic;transform:scaleX(1.0820);">text...</span>
<span class="t" style="left:260.30px;top:917.60px;font-size:16px;line-height:22px;color:#1a1c1f;transform:scaleX(0.9498);">40</span>
<span class="t" style="left:333.33px;top:917.60px;font-size:16px;line-height:22px;color:#1a1c1f;transform:scaleX(0.9677);">Изменение статуса оплаты менеджером</span>
<span class="t" style="left:633.30px;top:920.60px;font-size:12.8px;line-height:18px;color:#858796;">notification-changePaymentStatus</span>
<span class="t" style="left:1124.45px;top:917.60px;font-size:16px;line-height:22px;color:#1a1c1f;transform:scaleX(1.0527);">Notify</span>
<svg class="a" style="left:1321.00px;top:919.80px;" width="18.50" height="16.40" viewBox="0 0 576 512"><path fill="#4e73df" d="M402.6 83.2l90.2 90.2c3.8 3.8 3.8 10 0 13.8L274.4 405.6l-92.8 10.3c-12.4 1.4-22.9-9.1-21.5-21.5l10.3-92.8L388.8 83.2c3.8-3.8 10-3.8 13.8 0zm162-22.9l-48.8-48.8c-15.2-15.2-39.9-15.2-55.2 0l-35.4 35.4c-3.8 3.8-3.8 10 0 13.8l90.2 90.2c3.8 3.8 10 3.8 13.8 0l35.4-35.4c15.2-15.3 15.2-40 0-55.2zM384 346.2V448H64V128h229.8c3.2 0 6.200-1.300 8.500-3.500l40-40c7.600-7.600 2.200-20.500-8.500-20.500H48C21.500 64 0 85.500 0 112v352c0 26.500 21.500 48 48 48h352c26.500 0 48-21.500 48-48V306.200c0-10.700-12.900-16-20.500-8.500l-40 40c-2.200 2.300-3.500 5.300-3.500 8.500z"/></svg>
<svg class="a" style="left:1824.00px;top:919.90px;" width="14.40" height="16.20" viewBox="0 0 448 512"><path fill="#4469dc" d="M32 464a48 48 0 0 0 48 48h288a48 48 0 0 0 48-48V128H32zm272-256a16 16 0 0 1 32 0v224a16 16 0 0 1-32 0zm-96 0a16 16 0 0 1 32 0v224a16 16 0 0 1-32 0zm-96 0a16 16 0 0 1 32 0v224a16 16 0 0 1-32 0zM432 32H312l-9.400-18.700A24 24 0 0 0 281.100 0H166.800a23.720 23.720 0 0 0-21.400 13.300L136 32H16A16 16 0 0 0 0 48v32a16 16 0 0 0 16 16h416a16 16 0 0 0 16-16V48a16 16 0 0 0-16-16z"/></svg>
<div class="a badge" style="left:1355px;top:920.3px"></div>
<span class="t" style="left:1360.00px;top:922.10px;font-size:11.2px;line-height:16px;color:#fff;font-weight:bold;font-style:italic;transform:scaleX(1.0820);">text...</span>
<span class="t" style="left:260.30px;top:967.60px;font-size:16px;line-height:22px;color:#1a1c1f;transform:scaleX(0.9498);">41</span>
<span class="t" style="left:333.35px;top:967.60px;font-size:16px;line-height:22px;color:#1a1c1f;transform:scaleX(0.9507);">Клиент перечислил клиенту баллы</span>
<span class="t" style="left:589.30px;top:970.60px;font-size:12.8px;line-height:18px;color:#858796;transform:scaleX(1.0341);">notification-presentFrom</span>
<span class="t" style="left:1124.45px;top:967.60px;font-size:16px;line-height:22px;color:#1a1c1f;transform:scaleX(1.0527);">Notify</span>
<svg class="a" style="left:1321.00px;top:969.80px;" width="18.50" height="16.40" viewBox="0 0 576 512"><path fill="#4e73df" d="M402.6 83.2l90.2 90.2c3.8 3.8 3.8 10 0 13.8L274.4 405.6l-92.8 10.3c-12.4 1.4-22.9-9.1-21.5-21.5l10.3-92.8L388.8 83.2c3.8-3.8 10-3.8 13.8 0zm162-22.9l-48.8-48.8c-15.2-15.2-39.9-15.2-55.2 0l-35.4 35.4c-3.8 3.8-3.8 10 0 13.8l90.2 90.2c3.8 3.8 10 3.8 13.8 0l35.4-35.4c15.2-15.3 15.2-40 0-55.2zM384 346.2V448H64V128h229.8c3.2 0 6.200-1.300 8.500-3.500l40-40c7.600-7.600 2.200-20.500-8.500-20.500H48C21.500 64 0 85.500 0 112v352c0 26.500 21.500 48 48 48h352c26.500 0 48-21.500 48-48V306.200c0-10.700-12.900-16-20.500-8.500l-40 40c-2.200 2.300-3.500 5.300-3.500 8.500z"/></svg>
<svg class="a" style="left:1824.00px;top:969.90px;" width="14.40" height="16.20" viewBox="0 0 448 512"><path fill="#4469dc" d="M32 464a48 48 0 0 0 48 48h288a48 48 0 0 0 48-48V128H32zm272-256a16 16 0 0 1 32 0v224a16 16 0 0 1-32 0zm-96 0a16 16 0 0 1 32 0v224a16 16 0 0 1-32 0zm-96 0a16 16 0 0 1 32 0v224a16 16 0 0 1-32 0zM432 32H312l-9.400-18.700A24 24 0 0 0 281.100 0H166.800a23.720 23.720 0 0 0-21.400 13.300L136 32H16A16 16 0 0 0 0 48v32a16 16 0 0 0 16 16h416a16 16 0 0 0 16-16V48a16 16 0 0 0-16-16z"/></svg>
<div class="a badge" style="left:1355px;top:970.3px"></div>
<span class="t" style="left:1360.00px;top:972.10px;font-size:11.2px;line-height:16px;color:#fff;font-weight:bold;font-style:italic;transform:scaleX(1.0820);">text...</span>
<span class="t" style="left:260.30px;top:1018.60px;font-size:16px;line-height:22px;color:#1a1c1f;transform:scaleX(0.9498);">42</span>
<span class="t" style="left:333.35px;top:1018.60px;font-size:16px;line-height:22px;color:#1a1c1f;transform:scaleX(0.9455);">Название для блога</span>
<span class="t" style="left:483.30px;top:1021.60px;font-size:12.8px;line-height:18px;color:#858796;transform:scaleX(1.0479);">blogName</span>
<span class="t" style="left:1125.50px;top:1018.60px;font-size:16px;line-height:22px;color:#1a1c1f;transform:scaleX(0.9513);">Articles</span>
<svg class="a" style="left:1321.00px;top:1020.80px;" width="18.50" height="16.40" viewBox="0 0 576 512"><path fill="#4e73df" d="M402.6 83.2l90.2 90.2c3.8 3.8 3.8 10 0 13.8L274.4 405.6l-92.8 10.3c-12.4 1.4-22.9-9.1-21.5-21.5l10.3-92.8L388.8 83.2c3.8-3.8 10-3.8 13.8 0zm162-22.9l-48.8-48.8c-15.2-15.2-39.9-15.2-55.2 0l-35.4 35.4c-3.8 3.8-3.8 10 0 13.8l90.2 90.2c3.8 3.8 10 3.8 13.8 0l35.4-35.4c15.2-15.3 15.2-40 0-55.2zM384 346.2V448H64V128h229.8c3.2 0 6.200-1.300 8.500-3.500l40-40c7.600-7.600 2.200-20.500-8.500-20.500H48C21.500 64 0 85.500 0 112v352c0 26.500 21.500 48 48 48h352c26.500 0 48-21.500 48-48V306.200c0-10.700-12.900-16-20.500-8.500l-40 40c-2.200 2.300-3.500 5.300-3.500 8.500z"/></svg>
<svg class="a" style="left:1824.00px;top:1020.90px;" width="14.40" height="16.20" viewBox="0 0 448 512"><path fill="#4469dc" d="M32 464a48 48 0 0 0 48 48h288a48 48 0 0 0 48-48V128H32zm272-256a16 16 0 0 1 32 0v224a16 16 0 0 1-32 0zm-96 0a16 16 0 0 1 32 0v224a16 16 0 0 1-32 0zm-96 0a16 16 0 0 1 32 0v224a16 16 0 0 1-32 0zM432 32H312l-9.400-18.700A24 24 0 0 0 281.100 0H166.800a23.720 23.720 0 0 0-21.400 13.300L136 32H16A16 16 0 0 0 0 48v32a16 16 0 0 0 16 16h416a16 16 0 0 0 16-16V48a16 16 0 0 0-16-16z"/></svg>
<span class="t" style="left:1354.83px;top:1018.60px;font-size:16px;line-height:22px;color:#1a1c1f;transform:scaleX(0.9694);">Материалы</span>
<div class="a" style="left:224px;top:113px;width:1679px;height:56px;background:#f6f6f6;border-bottom:1px solid #cbcbcb"></div>
<span class="t" style="left:250.33px;top:121.60px;font-size:13px;line-height:18px;color:#55565f;transform:scaleX(1.0739);">Настройки</span>
<span class="t" style="left:252.00px;top:144.10px;font-size:15px;line-height:21px;color:#363842;font-weight:bold;">#</span>
<span class="t" style="left:324.99px;top:143.60px;font-size:16px;line-height:22px;color:#363842;font-weight:bold;transform:scaleX(1.0117);">Название</span>
<span class="t" style="left:1116.50px;top:143.60px;font-size:16px;line-height:22px;color:#363842;font-weight:bold;">Категория</span>
<span class="t" style="left:1313.30px;top:143.60px;font-size:16px;line-height:22px;color:#363842;font-weight:bold;transform:scaleX(1.0083);">Значение</span>
<div class="a" style="left:0;top:0;width:1920px;height:44px;background:#f0f0f0"></div>
<div class="a" style="left:0;top:44px;width:1920px;height:68px;background:#f9f9fb"></div>
<div class="a" style="left:0;top:112px;width:224px;height:1px;background:#e2e1e0"></div><div class="a" style="left:224px;top:112px;width:1696px;height:1px;background:#cccccc"></div>
<div class="a" style="left:32px;top:0;width:3px;height:43px;background:linear-gradient(90deg,rgba(0,0,0,.10),rgba(0,0,0,0))"></div>
<svg class="a" style="left:8px;top:12px" width="20" height="20" viewBox="0 0 20 20"><path d="M11.700 4.300L5.600 10l6.100 5.700" fill="none" stroke="#5b5b66" stroke-width="1.300" stroke-linecap="round" stroke-linejoin="round"/></svg>
<div class="a" style="left:1024px;top:4px;width:72px;height:36px;background:#fff;border-radius:4px;box-shadow:0 0 4px rgba(0,0,0,.28)"></div>
<div class="a" style="left:44px;top:14px;width:16px;height:16px;background:#fff"></div><span class="t" style="left:44.80px;top:13.10px;font-size:13.6px;line-height:19px;color:#4ab59f;font-weight:bold;transform:scaleX(1.2636);">M</span>
<div class="a tl" style="left:66px;top:12px;width:33.3px;height:22px;-webkit-mask-image:linear-gradient(90deg,#000 18.3px,transparent 33.3px);mask-image:linear-gradient(90deg,#000 18.3px,transparent 33.3px)"><span class="t" style="left:-0.57px;top:2.60px;font-size:12.2px;line-height:17px;color:#0c0c0d;transform:scaleX(0.8677);">Выбор</span></div>
<div class="a" style="left:120px;top:14px;width:16px;height:16px;background:#fff"></div><span class="t" style="left:122.35px;top:9.60px;font-size:17.8px;line-height:25px;color:#1a5fe0;font-weight:bold;transform:scaleX(0.8500);">R</span>
<div class="a tl" style="left:142px;top:12px;width:29.6px;height:22px;-webkit-mask-image:linear-gradient(90deg,#000 14.6px,transparent 29.6px);mask-image:linear-gradient(90deg,#000 14.6px,transparent 29.6px)"><span class="t" style="left:0.30px;top:2.60px;font-size:12.2px;line-height:17px;color:#0c0c0d;transform:scaleX(0.9426);">Даем</span></div>
<div class="a" style="left:196px;top:14px;width:16px;height:16px;background:#4b6fdc"></div><svg class="a" style="left:196px;top:14px" width="16" height="16" viewBox="0 0 16 16"><path fill="#fff" transform="translate(-1.300 0)" d="M12.600 2.100a3.500 3.500 0 0 0-4.300 4.400L3.100 11.600a1.300 1.300 0 0 0 0 1.800l.300.300a1.300 1.300 0 0 0 1.800 0l5.200-5.300a3.500 3.500 0 0 0 4.400-4.200l-2.100 2.100-1.700-.400-.400-1.700z"/></svg>
<div class="a tl" style="left:218px;top:12px;width:33.8px;height:22px;-webkit-mask-image:linear-gradient(90deg,#000 18.8px,transparent 33.8px);mask-image:linear-gradient(90deg,#000 18.8px,transparent 33.8px)"><span class="t" style="left:0.30px;top:2.60px;font-size:12.2px;line-height:17px;color:#0c0c0d;transform:scaleX(0.9052);">Приве</span></div>
<div class="a tl" style="left:272px;top:12px;width:58.0px;height:22px;-webkit-mask-image:linear-gradient(90deg,#000 43.0px,transparent 58.0px);mask-image:linear-gradient(90deg,#000 43.0px,transparent 58.0px)"><span class="t" style="left:0.30px;top:2.60px;font-size:12.2px;line-height:17px;color:#0c0c0d;transform:scaleX(0.9824);">movement</span></div>
<div class="a tl" style="left:348px;top:12px;width:31.0px;height:22px;-webkit-mask-image:linear-gradient(90deg,#000 31.0px,transparent 31.0px);mask-image:linear-gradient(90deg,#000 31.0px,transparent 31.0px)"><span class="t" style="left:0.30px;top:2.60px;font-size:12.2px;line-height:17px;color:#0c0c0d;transform:scaleX(0.8951);">Title 1</span></div>
<div class="a" style="left:424px;top:14px;width:15px;height:15px;background:#fff;border-right:1px solid #d4d4da;border-bottom:1px solid #d4d4da"></div><span class="t" style="left:426.90px;top:15.60px;font-size:9.3px;line-height:13px;color:#7f9cf0;font-weight:bold;transform:scaleX(0.8648);">FS</span>
<div class="a tl" style="left:446px;top:12px;width:33.0px;height:22px;-webkit-mask-image:linear-gradient(90deg,#000 18.0px,transparent 33.0px);mask-image:linear-gradient(90deg,#000 18.0px,transparent 33.0px)"><span class="t" style="left:0.30px;top:2.60px;font-size:12.2px;line-height:17px;color:#0c0c0d;transform:scaleX(0.9483);">Табли</span></div>
<div class="a" style="left:500px;top:14px;width:15px;height:15px;background:#fff;border-right:1px solid #d4d4da;border-bottom:1px solid #d4d4da"></div><span class="t" style="left:502.90px;top:15.60px;font-size:9.3px;line-height:13px;color:#7f9cf0;font-weight:bold;transform:scaleX(0.8648);">FS</span>
<div class="a tl" style="left:522px;top:12px;width:33.0px;height:22px;-webkit-mask-image:linear-gradient(90deg,#000 18.0px,transparent 33.0px);mask-image:linear-gradient(90deg,#000 18.0px,transparent 33.0px)"><span class="t" style="left:0.30px;top:2.60px;font-size:12.2px;line-height:17px;color:#0c0c0d;transform:scaleX(0.9483);">Табли</span></div>
<div class="a" style="left:576px;top:14px;width:16px;height:16px;background:#fff"></div><span class="t" style="left:576.90px;top:15.60px;font-size:10.3px;line-height:14px;color:#b0203c;transform:scaleX(1.0167);">AU</span>
<div class="a tl" style="left:598px;top:12px;width:32.5px;height:22px;-webkit-mask-image:linear-gradient(90deg,#000 17.5px,transparent 32.5px);mask-image:linear-gradient(90deg,#000 17.5px,transparent 32.5px)"><span class="t" style="left:-0.64px;top:2.60px;font-size:12.2px;line-height:17px;color:#0c0c0d;transform:scaleX(0.9396);">Редак</span></div>
<div class="a" style="left:652px;top:14px;width:15px;height:15px;background:#fff;border-right:1px solid #d4d4da;border-bottom:1px solid #d4d4da"></div><span class="t" style="left:654.90px;top:15.60px;font-size:9.3px;line-height:13px;color:#7f9cf0;font-weight:bold;transform:scaleX(0.8648);">FS</span>
<div class="a tl" style="left:674px;top:12px;width:33.3px;height:22px;-webkit-mask-image:linear-gradient(90deg,#000 18.3px,transparent 33.3px);mask-image:linear-gradient(90deg,#000 18.3px,transparent 33.3px)"><span class="t" style="left:0.30px;top:2.60px;font-size:12.2px;line-height:17px;color:#0c0c0d;transform:scaleX(0.8794);">Подар</span></div>
<div class="a" style="left:728px;top:14px;width:16px;height:16px;background:#fff"></div><span class="t" style="left:728.80px;top:13.10px;font-size:13.6px;line-height:19px;color:#4ab59f;font-weight:bold;transform:scaleX(1.2636);">M</span>
<div class="a tl" style="left:750px;top:12px;width:34.5px;height:22px;-webkit-mask-image:linear-gradient(90deg,#000 19.5px,transparent 34.5px);mask-image:linear-gradient(90deg,#000 19.5px,transparent 34.5px)"><span class="t" style="left:0.30px;top:2.60px;font-size:12.2px;line-height:17px;color:#0c0c0d;transform:scaleX(0.9392);">videos</span></div>
<div class="a" style="left:804px;top:14px;width:16px;height:16px;background:#fff"></div><span class="t" style="left:804.80px;top:13.10px;font-size:13.6px;line-height:19px;color:#4ab59f;font-weight:bold;transform:scaleX(1.2636);">M</span>
<div class="a tl" style="left:826px;top:12px;width:34.5px;height:22px;-webkit-mask-image:linear-gradient(90deg,#000 19.5px,transparent 34.5px);mask-image:linear-gradient(90deg,#000 19.5px,transparent 34.5px)"><span class="t" style="left:0.30px;top:2.60px;font-size:12.2px;line-height:17px;color:#0c0c0d;transform:scaleX(0.9502);">Польз</span></div>
<div class="a" style="left:880px;top:14px;width:16px;height:16px;background:#fff"></div><span class="t" style="left:880.80px;top:13.10px;font-size:13.6px;line-height:19px;color:#4ab59f;font-weight:bold;transform:scaleX(1.2636);">M</span>
<div class="a tl" style="left:902px;top:12px;width:29.0px;height:22px;-webkit-mask-image:linear-gradient(90deg,#000 14.0px,transparent 29.0px);mask-image:linear-gradient(90deg,#000 14.0px,transparent 29.0px)"><span class="t" style="left:0.30px;top:2.60px;font-size:12.2px;line-height:17px;color:#0c0c0d;transform:scaleX(0.9712);">Типы</span></div>
<div class="a" style="left:956px;top:14px;width:16px;height:16px;background:#4b6fdc"></div><svg class="a" style="left:956px;top:14px" width="16" height="16" viewBox="0 0 16 16"><path fill="#fff" d="M3.100 6h9.800v5.400a1.500 1.500 0 0 1-1.500 1.500H4.600a1.500 1.500 0 0 1-1.500-1.500z"/><path fill="none" stroke="#fff" stroke-width="2" d="M6.100 6.600V5.900a1.900 1.900 0 0 1 3.800 0v.700"/><rect x="5.200" y="9.600" width="5.600" height="1" fill="#4b6fdc" opacity=".12"/></svg>
<div class="a tl" style="left:978px;top:12px;width:32.5px;height:22px;-webkit-mask-image:linear-gradient(90deg,#000 17.5px,transparent 32.5px);mask-image:linear-gradient(90deg,#000 17.5px,transparent 32.5px)"><span class="t" style="left:-0.58px;top:2.60px;font-size:12.2px;line-height:17px;color:#0c0c0d;transform:scaleX(0.8759);">База з</span></div>
<div class="a" style="left:1032px;top:14px;width:16px;height:16px;background:#4b6fdc"></div><svg class="a" style="left:1032px;top:14px" width="16" height="16" viewBox="0 0 16 16"><path fill="#fff" d="M3.100 6h9.800v5.400a1.500 1.500 0 0 1-1.500 1.500H4.600a1.500 1.500 0 0 1-1.500-1.500z"/><path fill="none" stroke="#fff" stroke-width="2" d="M6.100 6.600V5.900a1.900 1.900 0 0 1 3.800 0v.700"/><rect x="5.200" y="9.600" width="5.600" height="1" fill="#4b6fdc" opacity=".12"/></svg>
<div class="a tl" style="left:1054px;top:12px;width:21.0px;height:22px;-webkit-mask-image:linear-gradient(90deg,#000 7.0px,transparent 21.0px);mask-image:linear-gradient(90deg,#000 7.0px,transparent 21.0px)"><span class="t" style="left:-0.61px;top:2.60px;font-size:12.2px;line-height:17px;color:#0c0c0d;transform:scaleX(0.9087);">Нас</span></div>
<div class="a" style="left:1108px;top:14px;width:15px;height:15px;background:#fff;border-right:1px solid #d4d4da;border-bottom:1px solid #d4d4da"></div><span class="t" style="left:1110.90px;top:15.60px;font-size:9.3px;line-height:13px;color:#7f9cf0;font-weight:bold;transform:scaleX(0.8648);">FS</span>
<div class="a tl" style="left:1130px;top:12px;width:33.9px;height:22px;-webkit-mask-image:linear-gradient(90deg,#000 18.9px,transparent 33.9px);mask-image:linear-gradient(90deg,#000 18.9px,transparent 33.9px)"><span class="t" style="left:-0.58px;top:2.60px;font-size:12.2px;line-height:17px;color:#0c0c0d;transform:scaleX(0.8808);">HOWT</span></div>
<div class="a" style="left:1184px;top:14px;width:15px;height:15px;background:#fff;border-right:1px solid #d4d4da;border-bottom:1px solid #d4d4da"></div><span class="t" style="left:1186.90px;top:15.60px;font-size:9.3px;line-height:13px;color:#7f9cf0;font-weight:bold;transform:scaleX(0.8648);">FS</span>
<div class="a tl" style="left:1206px;top:12px;width:34.0px;height:22px;-webkit-mask-image:linear-gradient(90deg,#000 19.0px,transparent 34.0px);mask-image:linear-gradient(90deg,#000 19.0px,transparent 34.0px)"><span class="t" style="left:0.30px;top:2.60px;font-size:12.2px;line-height:17px;color:#0c0c0d;transform:scaleX(0.9108);">Приве</span></div>
<svg class="a" style="left:1260px;top:14px" width="16" height="16" viewBox="0 0 16 16"><rect x="0.300" y="2.400" width="15.400" height="11.200" rx="3.200" fill="#ff0000"/><path fill="#fff" d="M6.400 5.600v4.800L10.600 8z"/></svg>
<div class="a tl" style="left:1282px;top:12px;width:33.2px;height:22px;-webkit-mask-image:linear-gradient(90deg,#000 18.2px,transparent 33.2px);mask-image:linear-gradient(90deg,#000 18.2px,transparent 33.2px)"><span class="t" style="left:0.30px;top:2.60px;font-size:12.2px;line-height:17px;color:#0c0c0d;transform:scaleX(0.9681);">#falco</span></div>
<div class="a" style="left:1336px;top:14px;width:16px;height:16px;background:#fff"></div><span class="t" style="left:1336.90px;top:15.60px;font-size:10.3px;line-height:14px;color:#b0203c;transform:scaleX(1.0167);">AU</span>
<div class="a tl" style="left:1358px;top:12px;width:33.7px;height:22px;-webkit-mask-image:linear-gradient(90deg,#000 18.7px,transparent 33.7px);mask-image:linear-gradient(90deg,#000 18.7px,transparent 33.7px)"><span class="t" style="left:0.30px;top:2.60px;font-size:12.2px;line-height:17px;color:#0c0c0d;transform:scaleX(0.9655);">Управ</span></div>
<svg class="a" style="left:1412px;top:14px" width="16" height="16" viewBox="0 0 16 16"><circle cx="8" cy="8" r="7" fill="none" stroke="#fff" stroke-width="2" stroke-dasharray="1 1.200" opacity=".7"/><circle cx="8" cy="8" r="4" fill="none" stroke="#fff" stroke-width="2" stroke-dasharray="1 1.300" opacity=".6"/></svg>
<div class="a tl" style="left:1434px;top:12px;width:31.3px;height:22px;-webkit-mask-image:linear-gradient(90deg,#000 16.3px,transparent 31.3px);mask-image:linear-gradient(90deg,#000 16.3px,transparent 31.3px)"><span class="t" style="left:0.30px;top:2.60px;font-size:12.2px;line-height:17px;color:#0c0c0d;transform:scaleX(0.9203);">Заказ</span></div>
<div class="a" style="left:1488px;top:14px;width:15px;height:15px;background:#fff;border-right:1px solid #d4d4da;border-bottom:1px solid #d4d4da"></div><span class="t" style="left:1490.90px;top:15.60px;font-size:9.3px;line-height:13px;color:#7f9cf0;font-weight:bold;transform:scaleX(0.8648);">FS</span>
<div class="a tl" style="left:1510px;top:12px;width:33.7px;height:22px;-webkit-mask-image:linear-gradient(90deg,#000 18.7px,transparent 33.7px);mask-image:linear-gradient(90deg,#000 18.7px,transparent 33.7px)"><span class="t" style="left:-0.67px;top:2.60px;font-size:12.2px;line-height:17px;color:#0c0c0d;transform:scaleX(0.9681);">Мой б</span></div>
<div class="a" style="left:1564px;top:14px;width:15px;height:15px;background:#fff;border-right:1px solid #d4d4da;border-bottom:1px solid #d4d4da"></div><span class="t" style="left:1566.90px;top:15.60px;font-size:9.3px;line-height:13px;color:#7f9cf0;font-weight:bold;transform:scaleX(0.8648);">FS</span>
<div class="a tl" style="left:1586px;top:12px;width:34.0px;height:22px;-webkit-mask-image:linear-gradient(90deg,#000 19.0px,transparent 34.0px);mask-image:linear-gradient(90deg,#000 19.0px,transparent 34.0px)"><span class="t" style="left:-0.65px;top:2.60px;font-size:12.2px;line-height:17px;color:#0c0c0d;transform:scaleX(0.9534);">Введе</span></div>
<svg class="a" style="left:1074px;top:16px" width="12" height="12" viewBox="0 0 12 12"><path d="M2.200 2.200l7.600 7.600M9.800 2.200l-7.600 7.600" stroke="#15141a" stroke-width="1.200" stroke-linecap="round"/></svg>
<svg class="a" style="left:1636px;top:12px" width="20" height="20" viewBox="0 0 20 20"><path d="M6.800 4.300l6.100 5.700-6.100 5.700" fill="none" stroke="#5b5b66" stroke-width="1.300" stroke-linecap="round" stroke-linejoin="round" opacity=".22"/></svg>
<svg class="a" style="left:1672px;top:13px" width="20" height="20" viewBox="0 0 20 20"><path d="M4.200 9.700h11.200M9.800 4.100v11.200" fill="none" stroke="#5b5b66" stroke-width="1.300" stroke-linecap="round"/></svg>
<svg class="a" style="left:1712px;top:12px" width="20" height="20" viewBox="0 0 20 20"><path d="M4.500 7l5.500 5.500L15.500 7" fill="none" stroke="#5b5b66" stroke-width="1.300" stroke-linecap="round" stroke-linejoin="round"/></svg>
<div class="a" style="left:1800px;top:21px;width:10px;height:1px;background:#111"></div>
<svg class="a" style="left:1845px;top:16px" width="12" height="12" viewBox="0 0 12 12"><rect x="1" y="3" width="7.500" height="7.500" rx="1" fill="none" stroke="#111" stroke-width="1"/><path d="M3.300 3V2a1 1 0 0 1 1-1h5.700a1 1 0 0 1 1 1v5.700a1 1 0 0 1-1 1H8.700" fill="none" stroke="#111" stroke-width="1"/></svg>
<svg class="a" style="left:1891px;top:16px" width="12" height="12" viewBox="0 0 12 12"><path d="M1 1l10 10M11 1L1 11" stroke="#111" stroke-width="1"/></svg>
<svg class="a" style="left:14px;top:54px" width="20" height="20" viewBox="0 0 20 20"><path d="M9.700 4.600L3.700 10.500l6 5.900M3.900 10.500h13" fill="none" stroke="#5b5b66" stroke-width="1.300" stroke-linecap="round" stroke-linejoin="round"/></svg>
<svg class="a" style="left:50px;top:54px" width="20" height="20" viewBox="0 0 20 20"><path d="M10.300 4.600l6 5.900-6 5.900M16.100 10.500h-13" fill="none" stroke="#5b5b66" stroke-width="1.300" stroke-linecap="round" stroke-linejoin="round" opacity=".4"/></svg>
<svg class="a" style="left:86px;top:55px" width="20" height="20" viewBox="0 0 20 20"><path d="M15.900 8.200A6.300 6.300 0 1 0 16.300 11" fill="none" stroke="#5b5b66" stroke-width="1.300" stroke-linecap="round"/><path d="M16.900 3.400v5.300h-5.300z" fill="#5b5b66"/></svg>
<div class="a" style="left:231px;top:48px;width:1422px;height:32px;background:#f0f0f4;border-radius:4px"></div>
<svg class="a" style="left:239px;top:55px" width="16" height="18" viewBox="0 0 16 18"><path d="M8 1.500c2 1.300 4.200 1.900 6.500 2v4.300c0 3.900-2.500 6.900-6.500 8.600-4-1.700-6.500-4.700-6.500-8.600V3.500c2.300-.1 4.500-.7 6.500-2z" fill="none" stroke="#5b5b66" stroke-width="1.300" stroke-linejoin="round"/></svg>
<svg class="a" style="left:267px;top:55px" width="16" height="18" viewBox="0 0 16 18"><rect x="2.400" y="8" width="11.200" height="8.400" rx="1.800" fill="none" stroke="#5b5b66" stroke-width="1.300"/><path d="M4.700 8V5.300a3.300 3.300 0 0 1 6.600 0V8" fill="none" stroke="#5b5b66" stroke-width="1.300"/></svg>
<svg class="a" style="left:295px;top:56px" width="16" height="16" viewBox="0 0 16 16"><path d="M2.800 1.600h10.400a1.400 1.400 0 0 1 1.400 1.400v6.400a1.400 1.400 0 0 1-1.400 1.400H12v3l-3.400-3H2.800a1.400 1.400 0 0 1-1.400-1.400V3a1.400 1.400 0 0 1 1.400-1.400z" fill="none" stroke="#5b5b66" stroke-width="1.300" stroke-linejoin="round"/><path d="M4.300 4.800h7.400M4.300 7.600h5.200" stroke="#5b5b66" stroke-width="1.200" stroke-linecap="round"/></svg>
<span class="t" style="left:320.33px;top:55.10px;font-size:14.5px;line-height:20px;color:#85858f;transform:scaleX(0.9656);">https://service.</span>
<span class="t" style="left:410.77px;top:55.10px;font-size:14.5px;line-height:20px;color:#15141a;transform:scaleX(0.9708);">web-automation.ru</span>
<span class="t" style="left:527.80px;top:55.10px;font-size:14.5px;line-height:20px;color:#85858f;transform:scaleX(0.9842);">/settings</span>
<svg class="a" style="left:1628px;top:55px" width="18" height="18" viewBox="0 0 18 18"><path d="M9 1.900l2.200 4.600 5 .7-3.600 3.500.9 5-4.500-2.400-4.500 2.400.9-5L1.800 7.200l5-.7z" fill="none" stroke="#5b5b66" stroke-width="1.300" stroke-linejoin="round"/></svg>
<svg class="a" style="left:1780px;top:57.600px" width="16" height="13.400" preserveAspectRatio="none" viewBox="0 0 16 14"><path d="M2.600 1.200h10.800a1.400 1.400 0 0 1 1.400 1.400v3.600a6.800 6.800 0 0 1-13.600 0V2.600a1.400 1.400 0 0 1 1.400-1.400z" fill="none" stroke="#5b5b66" stroke-width="1.300"/><path d="M4.700 5.200L8 8.400l3.300-3.200" fill="none" stroke="#5b5b66" stroke-width="1.300" stroke-linecap="round" stroke-linejoin="round"/></svg>
<div class="a" style="left:1816px;top:56px;width:16px;height:16px;border-radius:8px;background:#5b5b66"></div>
<span class="t" style="left:1821.00px;top:57.60px;font-size:9.8px;line-height:14px;color:#fff;font-weight:bold;transform:scaleX(0.8000);">E</span>
<div class="a" style="left:1852px;top:56px;width:12.600px;height:12.600px;border-radius:8px;background:#f0f4f6;border:1.200px solid #c3d3dc"></div>
<span class="t" style="left:1855.00px;top:57.10px;font-size:9.6px;line-height:13px;color:#747678;font-weight:bold;transform:scaleX(1.0553);">IP</span>
<svg class="a" style="left:1860px;top:64px" width="10" height="10" viewBox="0 0 10 10"><path d="M5 5l2.400 2.400" stroke="#3a3a42" stroke-width="2" stroke-linecap="round"/></svg>
<svg class="a" style="left:1888px;top:56px" width="16" height="16" viewBox="0 0 16 16"><path d="M2.600 3.700h10.800M2.600 7.600h10.800M2.600 11.600h10.800" stroke="#5b5b66" stroke-width="1.300" stroke-linecap="round"/></svg>
<svg class="a" style="left:12px;top:90px" width="16" height="16" viewBox="0 0 16 16"><defs><linearGradient id="ffa" x1=".9" y1=".08" x2=".18" y2=".92"><stop offset="0" stop-color="#fff45e"/><stop offset=".28" stop-color="#ffc61e"/><stop offset=".52" stop-color="#ff8316"/><stop offset=".78" stop-color="#ff2a36"/><stop offset="1" stop-color="#e31587"/></linearGradient><linearGradient id="ffb" x1=".5" y1="0" x2=".6" y2="1"><stop offset="0" stop-color="#00a7ff"/><stop offset=".55" stop-color="#0b5fe8"/><stop offset="1" stop-color="#3a1fb0"/></linearGradient><linearGradient id="ffc" x1="0" y1="0" x2="1" y2="1"><stop offset="0" stop-color="#ff3a2a"/><stop offset="1" stop-color="#ff9a14"/></linearGradient></defs><path fill="url(#ffa)" d="M9.700.200c.500 1.300 1.500 1.900 2.600 2.900 1.900 1.500 3.200 3.600 3.200 5.900a7.500 7.500 0 0 1-15 0c0-1.500.300-2.600 1-3.800-.100-1.200.100-2.300.400-3.100l2.100 1.300C5.600 1.900 7.800.900 9.700.200z"/><circle cx="8.100" cy="7.400" r="4.400" fill="url(#ffb)"/><path fill="url(#ffc)" d="M3.200 4.200c1.300-.500 2.500-.300 3.300.300l-.400 1.300 1.500.700-1.300 1.200c-.700.300-1.200.900-1 1.600.300 1 1.700 1.400 3.400.800-.500 1.300-1.700 1.900-3 1.900-2.400 0-3.900-1.900-3.900-4 0-1.400.500-2.800 1.400-3.800z"/><path fill="#ffd23a" d="M9.800 1.600c.300 1.200 1.300 1.800 2.100 2.700 1.300 1.400 1.400 3.300.600 4.900.200-1.700-.400-2.900-1.500-3.900-.900-.800-1.500-2-1.200-3.700z" opacity=".9"/></svg>
<span class="t" style="left:31.84px;top:90.60px;font-size:12.2px;line-height:17px;color:#15141a;transform:scaleX(0.9612);">Начальная страница</span>
<svg class="a" style="left:159.0px;top:91px" width="15" height="15" viewBox="0 0 15 15"><g fill="none" stroke="#5b5b66" stroke-width="1.150"><circle cx="7.500" cy="7.500" r="6.700"/><ellipse cx="7.500" cy="7.500" rx="3" ry="6.700"/><path d="M1 7.500h13"/></g></svg>
<span class="t" style="left:178.50px;top:90.60px;font-size:12.2px;line-height:17px;color:#15141a;transform:scaleX(0.9689);">Авиабилеты</span>
<svg class="a" style="left:259.0px;top:91px" width="15" height="15" viewBox="0 0 15 15"><g fill="none" stroke="#5b5b66" stroke-width="1.150"><circle cx="7.500" cy="7.500" r="6.700"/><ellipse cx="7.500" cy="7.500" rx="3" ry="6.700"/><path d="M1 7.500h13"/></g></svg>
<span class="t" style="left:278.50px;top:90.60px;font-size:12.2px;line-height:17px;color:#15141a;transform:scaleX(0.9073);">Яндекс</span>
<svg class="a" style="left:1797px;top:90px" width="16" height="15" viewBox="0 0 16 15"><path d="M1.700 2.900a1.300 1.300 0 0 1 1.300-1.300h3.100l1.700 1.800H13a1.300 1.300 0 0 1 1.300 1.300v7.400a1.300 1.300 0 0 1-1.300 1.300H3a1.300 1.300 0 0 1-1.300-1.300z" fill="none" stroke="#5b5b66" stroke-width="1.200" stroke-linejoin="round"/></svg>
<span class="t" style="left:1817.00px;top:90.60px;font-size:12.2px;line-height:17px;color:#15141a;transform:scaleX(0.9776);">Другие закладки</span>
<div class="a" style="left:240px;top:502px;width:525px;height:43px;border:4px solid #ff5a4a;box-shadow:2px 2px 2.500px rgba(10,15,20,.9), inset 2px 2px 2.500px rgba(10,15,20,.9)"></div>
<div class="a" style="left:928px;top:579px;width:64px;height:20px;background:#fff;border:1px solid #767676"></div>
<span class="t" style="left:934.34px;top:582.60px;font-size:12.2px;line-height:17px;color:#000;transform:scaleX(0.9630);">Название</span>
<div class="a" style="left:16px;top:990px;width:44px;height:44px;border-radius:5.600px;background:rgba(90,92,105,.5)"></div>
<svg class="a" style="left:32.60px;top:1005.90px;" width="10.90" height="17.40" viewBox="0 0 320 512"><path fill="#fff" d="M177 159.7l136 136c9.4 9.4 9.4 24.6 0 33.9l-22.6 22.6c-9.4 9.4-24.6 9.4-33.9 0L160 255.9l-96.4 96.4c-9.4 9.4-24.6 9.4-33.9 0L7 329.7c-9.4-9.4-9.4-24.6 0-33.9l136-136c9.400-9.500 24.600-9.500 34-.1z"/></svg>
<svg class="a" style="left:1881.30px;top:367.60px;" width="13.70" height="15.70" viewBox="0 0 448 512"><path fill="#8fa4ea" d="M223.7 239l136-136c9.4-9.4 24.6-9.4 33.9 0l22.6 22.6c9.4 9.4 9.4 24.6 0 33.9L319.9 256l96.4 96.4c9.4 9.4 9.4 24.6 0 33.9L393.7 409c-9.4 9.4-24.6 9.4-33.9 0l-136-136c-9.500-9.400-9.500-24.600-.100-34zm-192 34l136 136c9.400 9.400 24.600 9.400 33.900 0l22.600-22.600c9.400-9.400 9.400-24.600 0-33.900L127.900 256l96.400-96.400c9.400-9.400 9.400-24.600 0-33.900L201.700 103c-9.400-9.400-24.600-9.400-33.900 0l-136 136c-9.500 9.400-9.500 24.600-.100 34z"/></svg>
<div class="a" style="left:1881px;top:387px;width:21px;height:28px;background:#fff;border:1px solid #e3e6ee;border-radius:6px 0 0 6px"></div>
<svg class="a" style="left:1883.80px;top:394.80px;" width="14.20" height="16.20" viewBox="0 0 448 512"><path fill="#90a5e9" d="M224 256c70.7 0 128-57.3 128-128S294.7 0 224 0 96 57.3 96 128s57.3 128 128 128zm89.6 32h-16.7c-22.2 10.2-46.9 16-72.9 16s-50.6-5.800-72.900-16h-16.700C60.200 288 0 348.200 0 422.400V464c0 26.500 21.500 48 48 48h352c26.500 0 48-21.500 48-48v-41.600c0-74.200-60.200-134.400-134.400-134.400z"/></svg>
<div class="a" style="left:1903px;top:113px;width:17px;height:937px;background:#f0f0f0"></div>
<div class="a" style="left:1903px;top:640px;width:17px;height:234px;background:#cdcdcd"></div>
<svg class="a" style="left:1906px;top:116px" width="11" height="10" viewBox="0 0 11 10"><path d="M1.500 7l4-4 4 4" fill="none" stroke="#505050" stroke-width="1.900"/></svg>
<svg class="a" style="left:1906px;top:1037px" width="11" height="10" viewBox="0 0 11 10"><path d="M1.500 3l4 4 4-4" fill="none" stroke="#505050" stroke-width="1.900"/></svg>
<svg class="a" style="left:1810px;top:956px;overflow:visible" width="80" height="80" viewBox="0 0 80 80"><defs><filter id="cs" x="-30%" y="-30%" width="160%" height="170%"><feGaussianBlur stdDeviation="4"/></filter></defs><path d="M39 14c20 0 30 7.500 30 28.500S59 71 39 71 9 63.500 9 42.500 19 14 39 14z" fill="#000" opacity=".09" filter="url(#cs)" transform="translate(0,5)"/><path d="M39 10.500c20 0 30 7.500 30 29.500S59 69.500 39 69.500 9 62 9 40 19 10.500 39 10.500z" fill="#4467e3"/><path d="M39 23c12.500 0 18 4.600 18 18.500 0 12-4.500 17.300-14 18.300l-1 .1c-.5-.9-1.500-1.400-2.500-1.400H39c-12.500 0-18-4.600-18-17 0-13.900 5.500-18.500 18-18.500z" fill="#fff"/><circle cx="39" cy="35.400" r="3.100" fill="#4467e3"/><circle cx="39" cy="44.400" r="3.100" fill="#4467e3"/><circle cx="61" cy="18" r="10.200" fill="#e30613"/></svg>
<span class="t" style="left:1867.70px;top:965.10px;font-size:12.5px;line-height:18px;color:#fff;">2</span>
</body></html>
